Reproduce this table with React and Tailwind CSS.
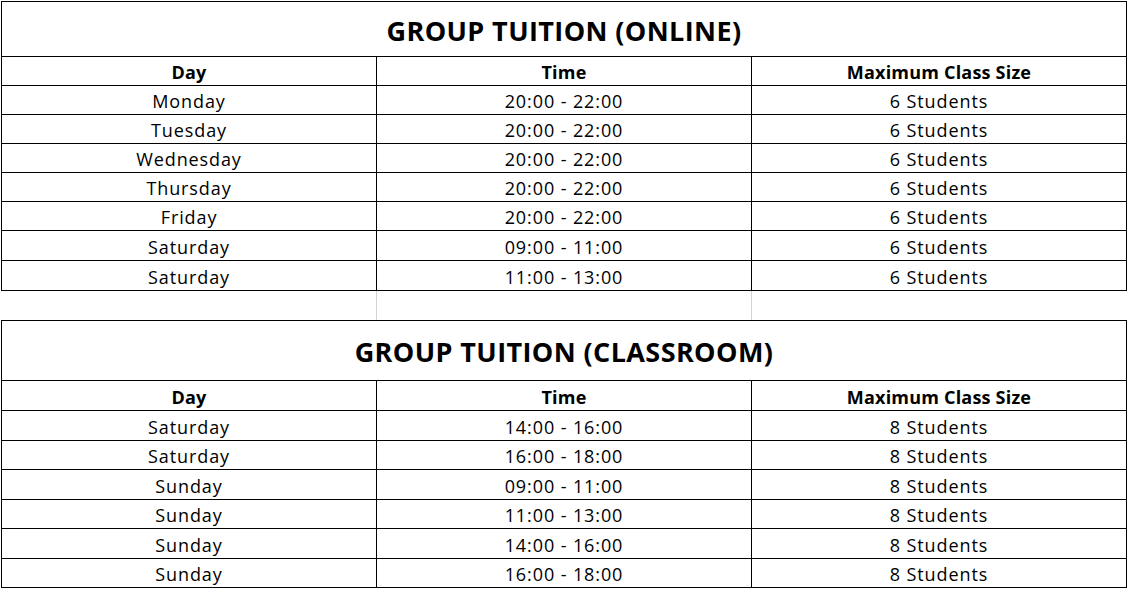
import React from 'react';

const online = [
  ['Monday', '20:00 - 22:00', '6 Students', 'h-[29px]'],
  ['Tuesday', '20:00 - 22:00', '6 Students', 'h-[29px]'],
  ['Wednesday', '20:00 - 22:00', '6 Students', 'h-[29px]'],
  ['Thursday', '20:00 - 22:00', '6 Students', 'h-[29px]'],
  ['Friday', '20:00 - 22:00', '6 Students', 'h-[29px]'],
  ['Saturday', '09:00 - 11:00', '6 Students', 'h-[30px]'],
  ['Saturday', '11:00 - 13:00', '6 Students', 'h-[30px]'],
];

const classroom = [
  ['Saturday', '14:00 - 16:00', '8 Students', 'h-[30px]'],
  ['Saturday', '16:00 - 18:00', '8 Students', 'h-[29px]'],
  ['Sunday', '09:00 - 11:00', '8 Students', 'h-[30px]'],
  ['Sunday', '11:00 - 13:00', '8 Students', 'h-[29px]'],
  ['Sunday', '14:00 - 16:00', '8 Students', 'h-[30px]'],
  ['Sunday', '16:00 - 18:00', '8 Students', 'h-[29px]'],
];

const Cell = ({ children, bold }) => (
  <div
    className={`w-[375px] flex items-center justify-center pt-[2px] border-r border-b border-black text-[18px] leading-none ${bold ? 'font-bold tracking-[0.2px]' : 'tracking-[0.9px]'}`}
  >
    {children}
  </div>
);

const Table = ({ title, titleH, headerH, rows }) => (
  <div className="w-[1126px] border-l border-t border-black">
    <div
      className={`${titleH} flex items-center justify-center pt-[2px] border-r border-b border-black text-[27px] tracking-[0.4px] font-bold leading-none`}
    >
      {title}
    </div>
    <div className={`${headerH} flex`}>
      <Cell bold>Day</Cell>
      <Cell bold>Time</Cell>
      <Cell bold>Maximum Class Size</Cell>
    </div>
    {rows.map(([day, time, size, h], i) => (
      <div key={i} className={`${h} flex`}>
        <Cell>{day}</Cell>
        <Cell>{time}</Cell>
        <Cell>{size}</Cell>
      </div>
    ))}
  </div>
);

export default function App() {
  return (
    <div
      className="w-[1128px] h-[590px] bg-white pt-px pl-px text-black overflow-hidden"
      style={{ fontFamily: '"Open Sans", Lato, sans-serif' }}
    >
      <Table title="GROUP TUITION (ONLINE)" titleH="h-[55px]" headerH="h-[29px]" rows={online} />
      <div className="flex h-[29px]">
        <div className="w-[376px] border-r border-[#d4d4d4]" />
        <div className="w-[375px] border-r border-[#d4d4d4]" />
        <div className="flex-1" />
      </div>
      <Table title="GROUP TUITION (CLASSROOM)" titleH="h-[60px]" headerH="h-[30px]" rows={classroom} />
    </div>
  );
}
